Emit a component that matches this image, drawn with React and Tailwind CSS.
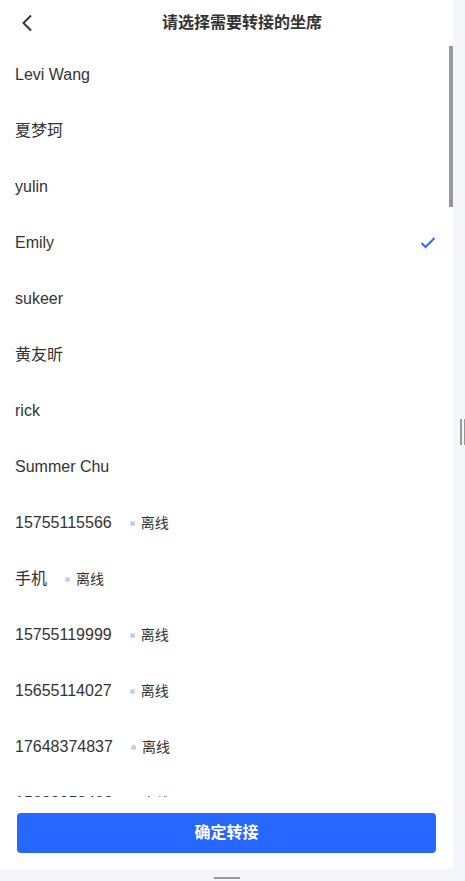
import React from "react";

const rows = [
  { name: "Levi Wang" },
  { name: "夏梦珂" },
  { name: "yulin" },
  { name: "Emily", checked: true },
  { name: "sukeer" },
  { name: "黄友昕" },
  { name: "rick" },
  { name: "Summer Chu" },
  { name: "15755115566", offline: true },
  { name: "手机", offline: true },
  { name: "15755119999", offline: true },
  { name: "15655114027", offline: true },
  { name: "17648374837", offline: true },
  { name: "15698858408", offline: true },
];

export default function App() {
  return (
    <div
      className="w-[465px] h-[881px] bg-[#f3f7fb] flex flex-col overflow-hidden"
      style={{ fontFamily: '"Liberation Sans", "Noto Sans CJK SC", sans-serif' }}
    >
      <div className="flex flex-row h-[869px]">
        <div className="w-[453px] h-full bg-white flex flex-col">
          <div className="h-[46px] flex flex-row items-center shrink-0">
            <div className="w-[44px] h-full flex items-center pl-[21px]">
              <svg width="12" height="18" viewBox="0 0 12 18" fill="none">
                <polyline points="10,1.5 2.5,9 10,16.5" stroke="#333" strokeWidth="2" fill="none" />
              </svg>
            </div>
            <div className="flex-1 text-center pr-[13px] text-[16px] font-bold text-[#333] pb-[1px]">
              请选择需要转接的坐席
            </div>
          </div>
          <div className="relative flex-1 overflow-hidden">
            <div className="flex flex-col">
              {rows.map((r, i) => (
                <div key={i} className="h-[56px] shrink-0 flex flex-row items-center pl-[15px] pr-[17px] pt-[2px]">
                  <span className="text-[16px] text-[#333]">{r.name}</span>
                  {r.offline && (
                    <span className="flex flex-row items-center ml-[18px]">
                      <span className="w-[5px] h-[5px] rounded-full bg-[#c7d1dc]"></span>
                      <span className="ml-[6px] text-[14px] text-[#333]">离线</span>
                    </span>
                  )}
                  <span className="flex-1"></span>
                  {r.checked && (
                    <svg width="16" height="12" viewBox="0 0 16 12" fill="none">
                      <polyline points="1.5,6 5.5,10 14.5,1" stroke="#2a6cf6" strokeWidth="2" fill="none" />
                    </svg>
                  )}
                </div>
              ))}
            </div>
            <div className="absolute right-0 top-0 w-[4px] h-[161px] bg-[#999]"></div>
          </div>
          <div className="h-[72px] shrink-0 px-[17px] pt-[16px] pb-[16px] bg-white">
            <button className="w-full h-[40px] rounded-[4px] bg-[#2667ff] text-white text-[16px] font-bold flex items-center justify-center">
              确定转接
            </button>
          </div>
        </div>
        <div className="flex-1 flex flex-col justify-center">
          <div className="flex flex-row pl-[7px] gap-[2px] mt-[-6px]">
            <div className="w-[2px] h-[26px] bg-[#999]"></div>
            <div className="w-[1px] h-[26px] bg-[#999]"></div>
          </div>
        </div>
      </div>
      <div className="flex-1 w-[453px] flex justify-center items-end pb-[2px]">
        <div className="w-[26px] h-[2px] bg-[#999]"></div>
      </div>
    </div>
  );
}
